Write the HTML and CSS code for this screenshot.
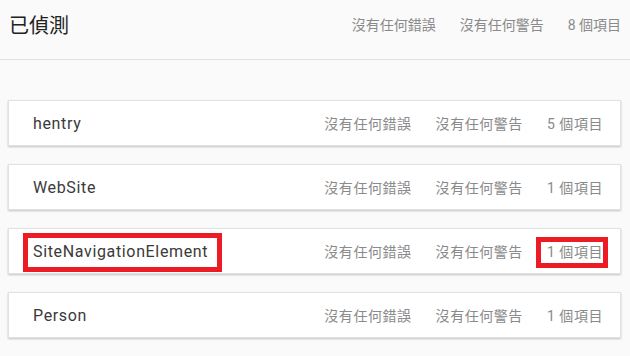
FILE: index.html
```html
<!DOCTYPE html>
<html lang="zh-Hant">
<head>
<meta charset="utf-8">
<link rel="stylesheet" href="styles.css">
</head>
<body>
<header class="header">
  <h1 class="title">已偵測</h1>
  <div class="stats">
    <span class="stat">沒有任何錯誤</span>
    <span class="stat">沒有任何警告</span>
    <span class="stat">8 個項目</span>
  </div>
</header>
<main class="list">
  <div class="card">
    <span class="name">hentry</span>
    <div class="stats card-stats">
      <span class="stat">沒有任何錯誤</span>
      <span class="stat">沒有任何警告</span>
      <span class="stat">5 個項目</span>
    </div>
  </div>
  <div class="card">
    <span class="name">WebSite</span>
    <div class="stats card-stats">
      <span class="stat">沒有任何錯誤</span>
      <span class="stat">沒有任何警告</span>
      <span class="stat">1 個項目</span>
    </div>
  </div>
  <div class="card">
    <span class="name">SiteNavigationElement</span>
    <div class="stats card-stats">
      <span class="stat">沒有任何錯誤</span>
      <span class="stat">沒有任何警告</span>
      <span class="stat">1 個項目</span>
    </div>
    <div class="mark mark-name"></div>
    <div class="mark mark-count"></div>
  </div>
  <div class="card">
    <span class="name">Person</span>
    <div class="stats card-stats">
      <span class="stat">沒有任何錯誤</span>
      <span class="stat">沒有任何警告</span>
      <span class="stat">1 個項目</span>
    </div>
  </div>
</main>
</body>
</html>
```
FILE: styles.css
```css
html, body {
  margin: 0;
  padding: 0;
  background: #fafafa;
}
body {
  width: 630px;
  height: 356px;
  overflow: hidden;
  font-family: Roboto, "Noto Sans CJK TC", sans-serif;
}
.header {
  height: 59px;
  border-bottom: 1px solid #e0e0e0;
  display: flex;
  align-items: center;
  justify-content: space-between;
  padding: 0 9px 0 9px;
  box-sizing: content-box;
}
.title {
  margin: 0;
  font-family: "Noto Sans CJK TC", sans-serif;
  font-weight: 400;
  font-size: 20px;
  color: #212121;
  position: relative;
  top: -5px;
}
.stats {
  display: flex;
  gap: 24px;
  font-family: Roboto, "Noto Sans CJK TC", sans-serif;
  font-size: 14px;
  color: #8a8a8a;
}
.header .stats {
  position: relative;
  top: -6px;
}
.list {
  padding: 40px 9px 0 8px;
  display: flex;
  flex-direction: column;
  gap: 18px;
}
.card {
  position: relative;
  height: 44px;
  background: #fff;
  border: 1px solid #e2e2e2;
  box-shadow: 0 1px 2px rgba(0, 0, 0, 0.22);
  display: flex;
  align-items: center;
  justify-content: space-between;
  padding: 0 17px 0 24px;
}
.name {
  font-size: 16px;
  letter-spacing: 0.65px;
  color: #3a3a3a;
}
.card-stats {
  gap: 24px;
  letter-spacing: 0.55px;
}
.mark {
  position: absolute;
  border: 5px solid #ed1c24;
  box-sizing: border-box;
}
.mark-name {
  left: 14px;
  top: 4px;
  width: 199px;
  height: 39px;
}
.mark-count {
  right: 12px;
  top: 8px;
  width: 72px;
  height: 31px;
}
```
